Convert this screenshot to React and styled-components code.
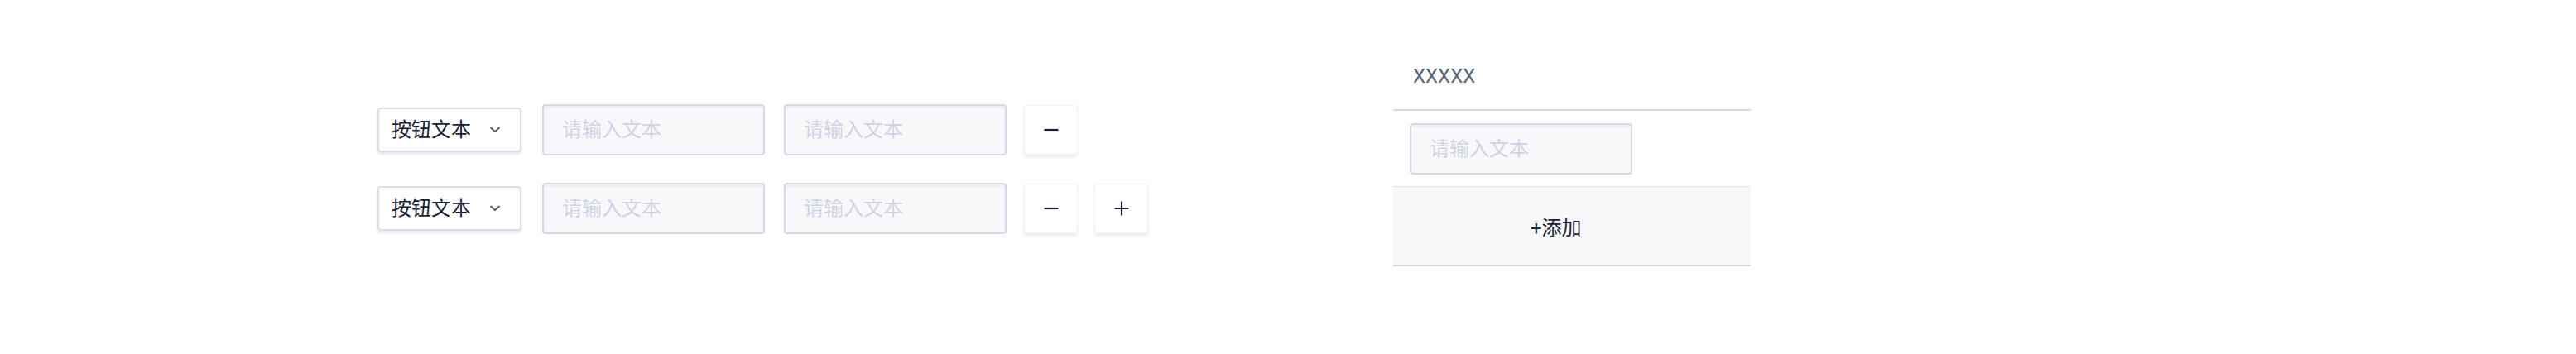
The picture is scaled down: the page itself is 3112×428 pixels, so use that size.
import React from "react";
import styled, { createGlobalStyle } from "styled-components";

const GlobalStyle = createGlobalStyle`
  html, body { margin: 0; padding: 0; background: #ffffff; }
  body { font-family: Roboto, "Noto Sans CJK SC", sans-serif; }
  * { box-sizing: border-box; }
`;

const Page = styled.div`
  display: flex;
  align-items: flex-start;
  width: 3112px;
  height: 428px;
  padding-left: 456px;
  font-family: Roboto, "Noto Sans CJK SC", sans-serif;
  font-size: 24px;
`;

const LeftForm = styled.div`
  display: flex;
  flex-direction: column;
  gap: 33px;
  padding-top: 126px;
`;

const Row = styled.div`
  display: flex;
  align-items: center;
  gap: 21px;
  height: 62px;
`;

const Select = styled.div`
  display: flex;
  align-items: center;
  justify-content: space-between;
  width: 174px;
  height: 54px;
  margin-right: 4px;
  padding: 0 24px 0 15px;
  background: #ffffff;
  border: 2px solid #dcdeee;
  border-radius: 4px;
  box-shadow: 0 3px 3px rgba(40, 50, 120, 0.1);
  color: #1a2035;
  font-size: 24px;
  line-height: 1;
`;

const Fields = styled.div`
  display: flex;
  gap: 23px;
`;

const TextInput = styled.input`
  width: ${(p) => p.$width || 269}px;
  height: 62px;
  padding: 0 0 0 22px;
  background: #f8f8fb;
  border: 2px solid #d6d8ea;
  border-radius: 4px;
  box-shadow: inset 0 3px 2px rgba(60, 70, 130, 0.05);
  font-family: Roboto, "Noto Sans CJK SC", sans-serif;
  font-size: 24px;
  color: #1a2035;
  outline: none;
  &::placeholder { color: #d0d3e4; }
`;

const Buttons = styled.div`
  display: flex;
  gap: 20px;
`;

const IconButton = styled.button`
  display: flex;
  align-items: center;
  justify-content: center;
  width: 65px;
  height: 60px;
  padding: 0;
  background: #ffffff;
  border: 1px solid #f3f3f8;
  border-radius: 4px;
  box-shadow: 0 3px 4px rgba(40, 50, 120, 0.1);
  color: #1a2035;
  cursor: pointer;
`;

const Panel = styled.div`
  display: flex;
  flex-direction: column;
  width: 432px;
  margin-left: 296px;
  margin-top: 48px;
`;

const HeaderRow = styled.div`
  display: flex;
  align-items: center;
  height: 86px;
  padding: 4px 0 0 24px;
  border-bottom: 2px solid #d6d8ea;
  color: #5b6478;
  font-size: 24px;
`;

const BodyRow = styled.div`
  display: flex;
  align-items: center;
  height: 92px;
  padding-left: 20px;
  border-bottom: 1px solid #dfe1ee;
`;

const FooterRow = styled.div`
  display: flex;
  align-items: center;
  height: 96px;
  padding-left: 166px;
  background: #f8f8fb;
  border-bottom: 2px solid #d6d8ea;
  color: #1a2035;
  font-size: 24px;
`;

const Chevron = () => (
  <svg width="12" height="8" viewBox="0 0 12 8" fill="none">
    <path d="M1 1.5 L6 6.2 L11 1.5" stroke="#4a536a" strokeWidth="1.8" strokeLinecap="round" strokeLinejoin="round" />
  </svg>
);

const MinusIcon = () => (
  <svg width="18" height="18" viewBox="0 0 18 18">
    <path d="M0.5 9 H17.5" stroke="#1a2035" strokeWidth="2.2" />
  </svg>
);

const PlusIcon = () => (
  <svg width="18" height="18" viewBox="0 0 18 18">
    <path d="M0.5 9 H17.5 M9 0.5 V17.5" stroke="#1a2035" strokeWidth="2.2" />
  </svg>
);

const FormRow = ({ withAdd }) => (
  <Row>
    <Select>
      <span>按钮文本</span>
      <Chevron />
    </Select>
    <Fields>
      <TextInput placeholder="请输入文本" />
      <TextInput placeholder="请输入文本" />
    </Fields>
    <Buttons>
      <IconButton aria-label="remove"><MinusIcon /></IconButton>
      {withAdd && <IconButton aria-label="add"><PlusIcon /></IconButton>}
    </Buttons>
  </Row>
);

export default function App() {
  return (
    <>
      <GlobalStyle />
      <Page>
        <LeftForm>
          <FormRow />
          <FormRow withAdd />
        </LeftForm>
        <Panel>
          <HeaderRow>XXXXX</HeaderRow>
          <BodyRow>
            <TextInput placeholder="请输入文本" />
          </BodyRow>
          <FooterRow>+添加</FooterRow>
        </Panel>
      </Page>
    </>
  );
}
